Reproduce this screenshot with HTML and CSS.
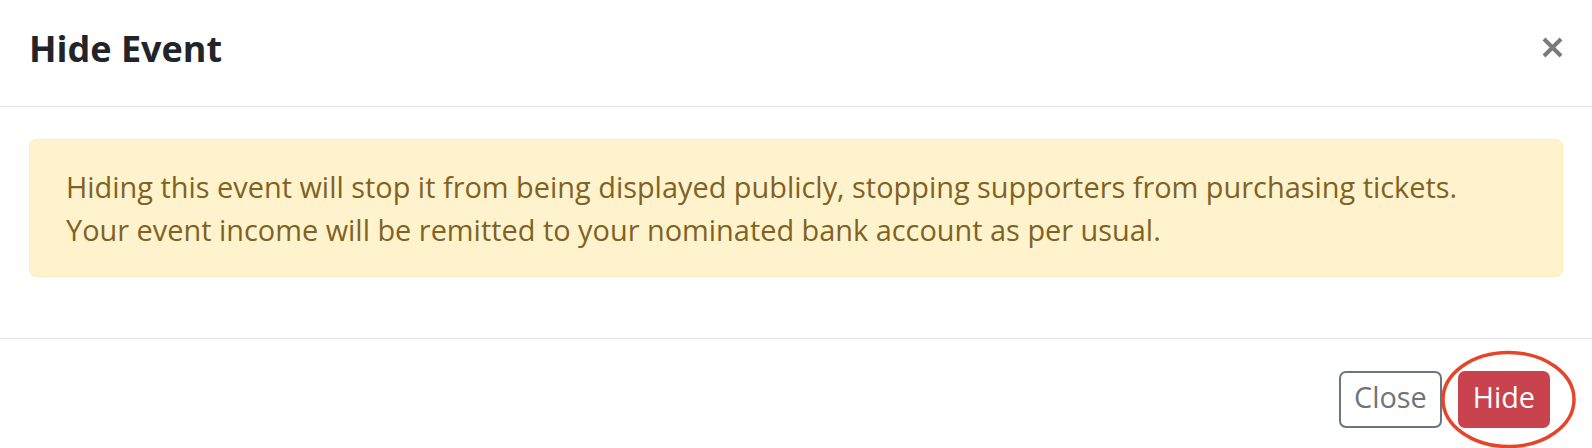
FILE: index.html
```
<!DOCTYPE html>
<html lang="en">
<head>
<meta charset="utf-8">
<title>Hide Event</title>
<link rel="stylesheet" href="styles.css">
</head>
<body>
<div class="modal">
  <div class="modal-header">
    <h5 class="modal-title">Hide Event</h5>
    <button class="close-x" type="button" aria-label="Close">
      <svg width="21" height="21" viewBox="0 0 21 21"><path d="M2 2 L19 19 M19 2 L2 19" stroke="#7b7b7b" stroke-width="4" stroke-linecap="butt"/></svg>
    </button>
  </div>
  <div class="modal-body">
    <div class="alert">Hiding this event will stop it from being displayed publicly, stopping supporters from purchasing tickets.<br>Your event income will be remitted to your nominated bank account as per usual.</div>
  </div>
  <div class="modal-footer">
    <button class="btn btn-outline" type="button">Close</button>
    <button class="btn btn-danger" type="button">Hide</button>
  </div>
  <svg class="annotation" width="137" height="99" viewBox="0 0 137 99"><ellipse cx="68.5" cy="49.5" rx="65.5" ry="47" fill="none" stroke="#e4452b" stroke-width="3.5"/></svg>
</div>
</body>
</html>
```
FILE: styles.css
```
* { box-sizing: border-box; }
html, body { margin: 0; padding: 0; background: #fff; }
body { font-family: "Open Sans", "Liberation Sans", sans-serif; color: #212529; }
.modal { position: relative; width: 1592px; height: 448px; overflow: hidden; }
.modal-header {
  display: flex;
  justify-content: space-between;
  align-items: flex-start;
  padding: 22px 29px 30px 29px;
  border-bottom: 1px solid #dee2e6;
}
.modal-title { margin: 0; font-size: 36px; line-height: 54px; font-weight: 700; color: #212529; }
.close-x {
  margin-top: 15px;
  padding: 0;
  border: 0;
  background: none;
  width: 21px;
  height: 21px;
  display: block;
}
.close-x svg { display: block; }
.modal-body { padding: 32px 29px 61px; }
.alert {
  background: #fff3cd;
  border: 1px solid #ffeeba;
  border-radius: 7px;
  color: #7f6224;
  padding: 25px 36px;
  font-size: 28.9px;
  line-height: 43.2px;
}
.modal-footer {
  border-top: 1px solid #dee2e6;
  display: flex;
  justify-content: flex-end;
  gap: 16px;
  padding: 32px 42px 0 0;
}
.btn {
  font-family: "Open Sans", "Liberation Sans", sans-serif;
  font-size: 28.8px;
  line-height: 43.2px;
  height: 57px;
  padding: 2px 13px 8px;
  border-radius: 7px;
  border: 2px solid;
  background: none;
}
.btn-outline { color: #6c757d; border-color: #6c757d; background: #fff; }
.btn-danger { color: #fff; background: #c8434d; border-color: #c8434d; }
.annotation { position: absolute; left: 1440px; top: 350px; }
```
